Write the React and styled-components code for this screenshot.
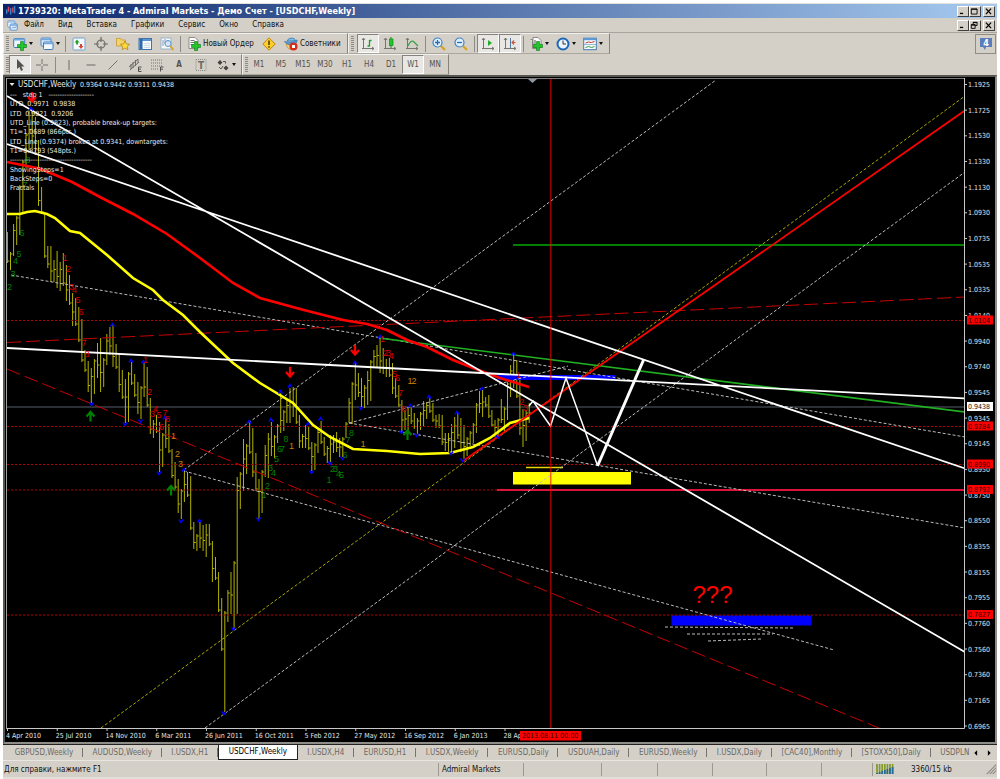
import styled, { createGlobalStyle, css } from "styled-components";

const GlobalStyle = createGlobalStyle`
  * {
    box-sizing: border-box;
  }
  body {
    margin: 3px;
    background: #fff;
    font-family: "DejaVu Sans Condensed", "DejaVu Sans", sans-serif;
    font-size: 8px;
    color: #111;
  }
  button {
    font: inherit;
    color: inherit;
    padding: 0;
    border: none;
    background: none;
  }
`;

// window
const Window = styled.div`
  display: flex;
  flex-direction: column;
  background: #d4d0c8;
  border-top: 1px solid #e4e2dc;
`;

const TitleBar = styled.header`
  display: flex;
  align-items: center;
  height: 14px;
  padding: 0 2px 0 3px;
  gap: 2px;
  background: linear-gradient(to right, #0a246a, #a6caf0);
`;

const Title = styled.h1`
  flex: 1;
  margin: 0;
  font-size: 9px;
  line-height: 14px;
  font-weight: bold;
  color: #fff;
  white-space: nowrap;
`;

const WindowButtons = styled.div`
  display: flex;
  margin-left: auto;

  button:last-child {
    margin-left: 2px;
  }
`;

const WindowButton = styled.button`
  display: flex;
  width: 12px;
  height: 11px;
  background: #d4d0c8;
  border: 1px solid;
  border-color: #fff #404040 #404040 #fff;
`;

const MenuBar = styled.nav`
  display: flex;
  align-items: center;
  height: 15px;
  padding: 0 2px 0 4px;
  border-bottom: 1px solid #a8a59e;
`;

const MenuItem = styled.button`
  height: 14px;
  padding: 0 7px;
  line-height: 14px;
`;

const MenuIcon = styled.span`
  display: flex;
  width: 10px;
`;

// toolbars
const ToolRow = styled.div`
  display: flex;
  height: 21px;
`;

const ToolGroup = styled.div`
  display: flex;
  align-items: center;
  height: 21px;
  padding: 0 2px;
  border: 1px solid;
  border-color: #f2f0ec #86837c #aaa79f #f2f0ec;
`;

const Grip = styled.span`
  width: 3px;
  height: 15px;
  margin-right: ${(p) => p.$gap || 0}px;
  background: repeating-linear-gradient(#8c8a84 0 1px, #d4d0c8 1px 2px);
`;

const Separator = styled.span`
  width: 1px;
  height: 16px;
  margin: 0 2px;
  background: #8c8a84;
`;

const ToolButton = styled.button`
  display: flex;
  align-items: center;
  justify-content: center;
  flex: none;
  gap: 2px;
  width: ${(p) => p.$width || 22}px;
  height: 19px;
  white-space: nowrap;
  border: 1px solid transparent;
  ${(p) =>
    p.$wide &&
    css`
      width: auto;
      padding: 0 3px;
    `}
  ${(p) =>
    p.$active &&
    css`
      background: #e9e7e3;
      border-color: #86837c #fff #fff #86837c;
    `}
`;

const Period = styled(ToolButton)`
  color: #55534f;
  font-size: 8px;
`;

const Notice = styled.button`
  display: flex;
  align-items: center;
  justify-content: center;
  width: 21px;
  height: 20px;
  margin: 1px 1px 0 auto;
  border: 1px solid #8f8c86;
`;

const Glyph = styled.svg`
  display: block;
  flex: none;
  width: ${(p) => p.$size || 14}px;
  height: ${(p) => p.$size || 14}px;
`;

const Caret = styled.span`
  border: 2px solid transparent;
  border-top: 3px solid #111;
  border-bottom: none;
`;

// chart
const ChartFrame = styled.main`
  border: 2px solid;
  border-color: #55564f #8e8c86 #8e8c86 #55564f;
  background: #000;
`;

const ChartSvg = styled.svg`
  display: block;
  width: 100%;
  height: auto;
  font-family: "DejaVu Sans Condensed", "DejaVu Sans", sans-serif;
  font-size: 7px;

  text {
    white-space: pre;
  }
`;

// tabs and status bar
const TabBar = styled.div`
  display: flex;
  height: 16px;
  border-top: 1px solid #222;
`;

const TabList = styled.div`
  display: flex;
  flex: 1;
  min-width: 0;
  padding-left: 2px;
  overflow: hidden;
`;

const Tab = styled.button`
  flex: 1 0 auto;
  height: 15px;
  padding: 0 8px;
  line-height: 14px;
  color: #6b6964;
  position: relative;

  &::after {
    content: "";
    position: absolute;
    right: 0;
    top: 3px;
    height: 9px;
    border-right: 1px solid #77746e;
  }
  &:last-child {
    padding-right: 0;
  }
  &:last-child::after {
    display: none;
  }
  ${(p) =>
    p.$active &&
    css`
      color: #000;
      background: #fff;
      border: 1px solid #222;
      border-top: none;
      &::after {
        display: none;
      }
    `}
`;

const TabArrows = styled.div`
  display: flex;
  align-items: center;
  gap: 5px;
  padding: 0 4px 0 1px;
`;

const StatusBar = styled.footer`
  display: flex;
  align-items: center;
  height: 19px;
  border-top: 1px solid #e8e6e1;
  border-bottom: 2px solid #e2dfd9;
`;

const StatusCell = styled.div`
  display: flex;
  align-items: center;
  flex: none;
  gap: 17px;
  width: ${(p) => p.$width}px;
  height: 13px;
  padding-left: 3px;
  border-left: 1px solid #9c9992;
  white-space: nowrap;
`;

const StatusHelp = styled.div`
  flex: 1;
  padding-left: 1px;
`;

const ResizeCorner = styled(Glyph)`
  margin-left: auto;
`;

// icons
const Plus = ({ x = 0, y = 0 }) => (
  <path
    transform={`translate(${x} ${y})`}
    d="M3 0h3v3h3v3h-3v3h-3v-3h-3v-3h3z"
    fill="#22c52a"
    stroke="#0c7a14"
    strokeWidth=".6"
  />
);

const Axes = () => (
  <path d="M2.500 1v11M1 11.500h12M1 3l1.500-2 1.500 2M11 10l2 1.500-2 1.500" fill="none" stroke="#77756f" />
);

const icons = {
  logo: (
    <>
      <path d="M3.500 1v7M9.500 2v7" stroke="#e0455a" strokeWidth="2" />
      <path d="M6.500 3v9M12 0v10M1 5v6" stroke="#3b86c9" strokeWidth="2" />
    </>
  ),
  menuLogo: (
    <>
      <rect x="1" y="1" width="9" height="8" rx="1" fill="#fff" stroke="#5b92cc" />
      <rect x="4" y="5" width="9" height="8" rx="1" fill="#e6f1fc" stroke="#3d7cc0" />
      <path d="M1 2.500h9M4 6.500h9" stroke="#6aa4de" strokeWidth="1.500" />
      <path d="M6 11l2-2 2 1 2-2" stroke="#3d7cc0" fill="none" />
    </>
  ),
  newChart: (
    <>
      <rect x=".7" y="1.500" width="11" height="9" rx="1" fill="#eef6fd" stroke="#3b79b8" />
      <path d="M1 2.500h10.500" stroke="#70a8dc" strokeWidth="2" />
      <Plus x={4.5} y={4.5} />
    </>
  ),
  profiles: (
    <>
      <rect x="1" y="1" width="10" height="8" rx="1" fill="#dcebfa" stroke="#4a86c2" />
      <rect x="3.500" y="5" width="9.500" height="7.500" rx="1" fill="#f4f9fe" stroke="#3b79b8" />
      <path d="M1.500 2.500h9M4 6.500h8.500" stroke="#6ca6de" strokeWidth="1.500" />
    </>
  ),
  market: (
    <>
      <rect x="1" y="1" width="12" height="12" rx="1" fill="#f6fafd" stroke="#6da3d6" />
      <path d="M5 2.500l2.500 3h-1.500v2h-2v-2h-1.500z" fill="#2ba52f" />
      <path d="M9 12l2.500-3h-1.500v-2h-2v2h-1.500z" fill="#d9442f" />
    </>
  ),
  navigator: (
    <g fill="none" stroke="#6d6b66" strokeWidth="1.200">
      <circle cx="7" cy="7" r="4" />
      <path d="M7 0v5M7 9v5M0 7h5M9 7h5" />
    </g>
  ),
  favorites: (
    <>
      <path d="M.5 1.500h4l1 1.500h4v6h-9z" fill="#f3d36e" stroke="#c49a2b" strokeWidth=".8" />
      <path
        d="M9 4l1.400 3 3.200.3-2.400 2.200.7 3.200-2.900-1.700-2.900 1.700.7-3.200-2.400-2.200 3.200-.3z"
        fill="#ffdf3c"
        stroke="#b98410"
        strokeWidth=".8"
      />
    </>
  ),
  dataWindow: (
    <>
      <rect x="1" y="1.500" width="12.500" height="11" fill="#f2f8fd" stroke="#3f74ad" />
      <path d="M1.500 3h11.500" stroke="#5b95d0" strokeWidth="2" />
      <path d="M3 2v10" stroke="#2f68a8" strokeWidth="3" />
      <path d="M6 6.500h6M6 8.500h6M6 10.500h6" stroke="#c9d4e0" strokeWidth=".8" />
    </>
  ),
  tester: (
    <>
      <rect x="1" y="1" width="10" height="11" fill="#f7fafc" stroke="#88a9c8" strokeWidth=".8" />
      <path d="M3 3v6M5 2v5M8 3v4" stroke="#7d9bb8" />
      <circle cx="8" cy="6.500" r="3" fill="#cfe6fa" fillOpacity=".8" stroke="#5b92c6" />
      <path d="M10.300 9l3 4" stroke="#d8a428" strokeWidth="2" />
    </>
  ),
  newOrder: (
    <>
      <path d="M2 .5h6l3 3v8h-9z" fill="#fff" stroke="#75736d" strokeWidth=".8" />
      <path d="M3.500 3.500h4M3.500 5.500h5M3.500 7.500h3" stroke="#55534f" strokeWidth=".8" />
      <Plus x={4.5} y={4.5} />
    </>
  ),
  warning: (
    <>
      <path d="M7 .8l6.200 6.200-6.200 6.200-6.200-6.200z" fill="#fccf2b" stroke="#c1850b" />
      <path d="M7 3.500v4.500M7 9.300v1.500" stroke="#4a3a08" strokeWidth="1.500" />
    </>
  ),
  experts: (
    <>
      <path d="M2 7q2 7 7 5l3-6z" fill="#f6d372" stroke="#bb8c25" strokeWidth=".7" />
      <path d="M3 4q1-3 5-3 3 0 3.500 3z" fill="#7cbce8" stroke="#2d74ae" strokeWidth=".7" />
      <path d="M.3 4.500q6 2 13-1.500 0 3-3 4.500-6 2-10-3z" fill="#5398d2" stroke="#2d74ae" strokeWidth=".6" />
      <circle cx="9.500" cy="9.500" r="4" fill="#d92a1c" />
      <rect x="8" y="8" width="3" height="3" fill="#fff" />
    </>
  ),
  bars: (
    <>
      <Axes />
      <path d="M8.500 3v6.500M8.500 3.500h2M6.500 9h2" stroke="#1f9a28" strokeWidth="1.300" fill="none" />
    </>
  ),
  candles: (
    <>
      <Axes />
      <path d="M8 0v11" stroke="#128a1c" />
      <rect x="6.500" y="2" width="3.500" height="6.500" fill="#22c52a" stroke="#128a1c" strokeWidth=".7" />
    </>
  ),
  lineChart: (
    <>
      <Axes />
      <path d="M3 9q3-7 6-4l4 4" fill="none" stroke="#3aa142" strokeWidth="1.200" />
    </>
  ),
  zoomIn: (
    <>
      <path d="M8.500 8.500l4.500 4.500" stroke="#d8a428" strokeWidth="2.400" />
      <circle cx="5.500" cy="5.500" r="4.500" fill="#dff0fd" stroke="#3f84c6" strokeWidth="1.200" />
      <path d="M5.500 3v5M3 5.500h5" stroke="#2b6cae" strokeWidth="1.300" />
    </>
  ),
  zoomOut: (
    <>
      <path d="M8.500 8.500l4.500 4.500" stroke="#d8a428" strokeWidth="2.400" />
      <circle cx="5.500" cy="5.500" r="4.500" fill="#dff0fd" stroke="#3f84c6" strokeWidth="1.200" />
      <path d="M3 5.500h5" stroke="#2b6cae" strokeWidth="1.300" />
    </>
  ),
  autoScroll: (
    <>
      <Axes />
      <path d="M7 3l4 3-4 3z" fill="#22ad2a" />
    </>
  ),
  chartShift: (
    <>
      <Axes />
      <path d="M7.500 1v10" stroke="#55799f" />
      <path d="M12.500 5.500h-3.500M11 3.500l-2 2 2 2" fill="none" stroke="#c8553c" strokeWidth="1.100" />
    </>
  ),
  indicators: (
    <>
      <path d="M4 .5h5l3 3v7h-8zM1.500 2.500h2v9h6" fill="#fff" stroke="#75736d" strokeWidth=".8" />
      <path d="M6 3v5" stroke="#55534f" />
      <Plus x={4.5} y={4.5} />
    </>
  ),
  clock: (
    <>
      <circle cx="7" cy="7" r="5.500" fill="#eaf5fe" stroke="#1d66b5" strokeWidth="2" />
      <path d="M7 3.500v3.500h3" fill="none" stroke="#333" />
    </>
  ),
  template: (
    <>
      <rect x=".7" y="1.200" width="12.600" height="11.500" fill="#f6fafd" stroke="#3f7ab5" />
      <path d="M1 2.200h12" stroke="#5b9ad6" strokeWidth="2" />
      <path d="M2.500 6l3-1 3 .5 3-1" fill="none" stroke="#c0392b" />
      <path d="M1 7.500h12" stroke="#7fa6cb" strokeWidth=".8" />
      <path d="M2.500 10.500l3-1 3 1 3-1" fill="none" stroke="#2f9a3a" />
    </>
  ),
  cursor: <path d="M4 1v10l2.500-2 1.500 4 2-1-1.700-3.500h3.200z" fill="#55534f" />,
  crosshair: <path d="M7 1v5M7 8v5M1 7h5M8 7h5" stroke="#75736d" />,
  vline: <path d="M7 2v10" stroke="#6d6b66" />,
  hline: <path d="M2.500 7h9" stroke="#6d6b66" />,
  trend: <path d="M2.500 11.500l9-9" stroke="#75736d" />,
  channel: (
    <>
      <path d="M1 9l9-8M2 12l9-8M3 6v5M5 4v6M7.500 2v6M10 1v4" stroke="#6d6b66" fill="none" />
      <path d="M13.500 9h-3v4.500h3M10.500 11.200h2.500" stroke="#44423e" fill="none" strokeWidth=".9" />
    </>
  ),
  fibo: (
    <>
      <path d="M1 2h11M1 5h11M1 8h11M1 11h7" stroke="#75736d" strokeDasharray="1 1" />
      <path d="M13.500 9h-3v4.500M10.500 11.200h2.500" stroke="#44423e" fill="none" strokeWidth=".9" />
    </>
  ),
  label: <rect x="2" y="1.500" width="10" height="11" fill="none" stroke="#8c8a84" strokeDasharray="1 1" />,
  arrows: (
    <>
      <path d="M4 2l2.500 2.500-2.500 2.500-2.500-2.500zM10 7.500l2.500 2.500-2.500 2.500-2.500-2.500z" fill="#44423e" />
      <path d="M3 9l2 2 2-3M7 3.500h2.500v2" stroke="#55534f" fill="none" />
    </>
  ),
  minimize: <path d="M3 10h5" stroke="#000" strokeWidth="2" />,
  maximize: <path d="M2 3h9v8h-9zM2 3.500h9" stroke="#000" strokeWidth="1.400" fill="none" />,
  restore: <path d="M5 5v-3h6v5h-3M2 5.500h6v6h-6zM5 2.500h6M2 6.500h6" stroke="#000" strokeWidth="1.400" fill="none" />,
  close: <path d="M3 2.500l8 8.500M11 2.500l-8 8.500" stroke="#000" strokeWidth="2" />,
  prev: <path d="M9 2v10l-5-5z" fill="#000" />,
  next: <path d="M5 2v10l5-5z" fill="#000" />,
  corner: <path d="M13 2l-11 11M13 5.500l-7.500 7.500M13 9l-4 4" stroke="#8c8a84" strokeWidth="1.300" />,
};

const Icon = ({ name, size, children }) => (
  <Glyph viewBox="0 0 14 14" $size={size} aria-hidden="true">
    {icons[name]}
    {children}
  </Glyph>
);

// [high, low] of every weekly bar, from the left edge
const bars = [
  [232, 263], [252, 270], [224, 256], [216, 245], [185, 235], [160, 213], [133, 168], [110, 150],
  [111, 148], [117, 155], [140, 206], [187, 214], [214, 258], [246, 268], [246, 282], [260, 282],
  [251, 288], [262, 291], [253, 286], [265, 301], [275, 305], [293, 326], [298, 326], [307, 342],
  [319, 362], [350, 372], [361, 392], [368, 403], [359, 394], [343, 378], [338, 392], [358, 387],
  [334, 365], [327, 355], [325, 367], [344, 369], [353, 392], [370, 399], [379, 423], [372, 422],
  [362, 385], [374, 397], [382, 414], [386, 419], [363, 397], [367, 407], [398, 434], [420, 438],
  [415, 433], [422, 472], [433, 467], [418, 448], [424, 453], [449, 478], [462, 489], [479, 513],
  [489, 519], [470, 502], [472, 497], [476, 530], [522, 549], [534, 551], [522, 548], [525, 551],
  [524, 557], [524, 546], [541, 582], [557, 580], [572, 612], [598, 651], [611, 712], [590, 622],
  [572, 614], [561, 629], [477, 614], [472, 509], [439, 491], [444, 474], [423, 454], [428, 477],
  [453, 491], [479, 519], [470, 513], [445, 477], [433, 478], [422, 456], [435, 458], [424, 443],
  [393, 433], [410, 431], [400, 423], [388, 423], [387, 417], [388, 424], [415, 448], [434, 448],
  [425, 448], [427, 450], [442, 471], [443, 470], [430, 453], [421, 444], [437, 456], [446, 463],
  [435, 462], [435, 453], [432, 452], [438, 457], [437, 457], [422, 438], [398, 423], [382, 424],
  [363, 400], [373, 397], [378, 407], [385, 408], [371, 405], [360, 401], [350, 368], [345, 368],
  [338, 373], [348, 374], [359, 377], [358, 377], [363, 394], [378, 398], [385, 407], [400, 432],
  [410, 430], [408, 430], [407, 424], [413, 429], [418, 435], [412, 430], [401, 427], [402, 419],
  [398, 413], [403, 422], [415, 428], [414, 428], [415, 445], [433, 451], [433, 452], [424, 453],
  [417, 448], [413, 439], [418, 452], [425, 460], [437, 456], [431, 446], [423, 443], [403, 433],
  [391, 413], [390, 417], [397, 407], [395, 418], [410, 427], [420, 437], [418, 437], [399, 423],
  [407, 432], [382, 420], [365, 397], [354, 388], [360, 398], [377, 435], [409, 447], [410, 441],
  [403, 423],
];

const FIRST_X = 7.4;
const BAR_STEP = 3.106;

const barPath = bars
  .map(([high, low], i) => {
    const x = FIRST_X + i * BAR_STEP;
    // the close leans to the middle of the next bar
    const next = bars[i + 1] || bars[i];
    const mid = (next[0] + next[1]) / 2;
    const close = Math.min(low - 2, Math.max(high + 2, mid));
    return `M${x.toFixed(1)} ${high}V${low}M${x.toFixed(1)} ${close}h2`;
  })
  .join("");

const prices = [
  "1.1925", "1.1725", "1.1530", "1.1330", "1.1130", "1.0930", "1.0735", "1.0535", "1.0335",
  "1.0140", "0.9940", "0.9740", "0.9545", "0.9345", "0.9145", "0.8950", "0.8750", "0.8550",
  "0.8355", "0.8155", "0.7955", "0.7760", "0.7560", "0.7360", "0.7165", "0.6965",
];

const dates = [
  "4 Apr 2010", "25 Jul 2010", "14 Nov 2010", "6 Mar 2011", "26 Jun 2011", "16 Oct 2011",
  "5 Feb 2012", "27 May 2012", "16 Sep 2012", "6 Jan 2013", "28 Ap",
];

const levels = [
  ["1.0104", 320.5],
  ["0.9284", 426.5],
  ["0.8990", 464.5],
  ["0.8792", 490],
  ["0.7827", 615],
];

const dottedLines = [
  [205, 728, 965, 172],
  [184, 470, 716, 80],
  [184, 471, 834, 650],
  [11, 275, 965, 437],
  [349, 423, 965, 528],
  [349, 423, 568, 366],
  [665, 627, 794, 628],
  [687, 634, 773, 634],
  [708, 641, 761, 639],
];

const fractalsUp = [
  [31, 109], [112.5, 325], [131, 361], [143.5, 362], [165, 418], [184, 470], [199.5, 521],
  [249, 422], [271, 420], [280.5, 392], [290, 386], [308, 424], [320.5, 419], [355, 363],
  [380, 337], [410.5, 406], [429, 397], [457, 413], [482, 389], [513.5, 354],
];

const fractalsDown = [
  [91.5, 404], [125, 424], [140.5, 421], [159, 473], [181, 521], [224, 713], [233.5, 629],
  [258.5, 519], [311.5, 472], [330, 463], [342.5, 458], [361, 408], [401.5, 432], [416.5, 435],
  [451, 453], [462.5, 460], [498, 437],
];

const GREEN = "#008000";
const RED = "#d80000";
const ORANGE = "#d08000";

const counts = [
  [GREEN, [[2, 9.5, 290], [3, 13, 276.5], [4, 15.5, 264], [5, 19, 256.5], [6, 22, 235.5], [7, 25, 188], [8, 28, 163]]],
  [RED, [[1, 65, 260.5], [2, 68.5, 271.5], [3, 71.5, 290], [4, 74.5, 293], [5, 78, 303], [6, 81, 315], [7, 84, 346], [8, 87, 357]]],
  [RED, [[1, 145.5, 363], [2, 149.5, 395], [3, 152.5, 416.5], [4, 155.5, 411.5], [5, 159, 418], [6, 161.5, 430], [7, 165, 415.5], [8, 167.5, 421.5]]],
  [ORANGE, [[1, 173.5, 439], [2, 177.5, 457], [3, 180.5, 466.5]]],
  [GREEN, [[1, 264, 498], [2, 267.5, 489], [3, 270.5, 470.5], [4, 273.5, 475.5], [5, 276.5, 462], [6, 279.5, 452], [7, 282.5, 451.5], [8, 286, 442]]],
  [ORANGE, [[1, 291.5, 449], [1, 363, 447], [1, 410, 384], [2, 414, 384]]],
  [GREEN, [[1, 329, 483], [2, 332.5, 471.5], [3, 335.5, 472], [4, 338.5, 476.5], [5, 341.5, 477.5], [6, 345, 458], [7, 348, 443], [8, 351.5, 435.5]]],
  [RED, [[1, 382.5, 342], [2, 385.5, 355.5], [3, 388.5, 355.5], [4, 391.5, 359], [5, 394.5, 376.5], [6, 397.5, 380.5], [7, 400.5, 395.5], [8, 404, 412]]],
  [RED, [[1, 518.5, 378], [2, 522, 405], [3, 525.5, 410.5]]],
];

const comments = [
  ["UTD  0.9971  0.9838", 106],
  ["LTD  0.9821  0.9206", 116],
  ["UTD_Line (0.9823), probable break-up targets:", 125],
  ["T1=1.0689 (866pts.)", 134],
  ["LTD_Line (0.9374) broken at 0.9341, downtargets:", 144],
  ["T1=0.8793 (548pts.)", 153],
  ["------------------------------------", 162],
  ["ShowingSteps=1", 172],
  ["BackSteps=0", 181],
  ["Fractals", 190],
];

const BigArrow = ({ x, y, color, up }) => (
  <path
    transform={`translate(${x} ${y})${up ? "" : " scale(1 -1)"}`}
    d="M0 5v-9M-4 0l4-4.500 4 4.500"
    fill="none"
    stroke={color}
    strokeWidth="2.200"
  />
);

const Chart = () => (
  <ChartSvg viewBox="5 77 990 665" role="img" aria-label="USDCHF,Weekly">
    <defs>
      <clipPath id="plot">
        <rect x="7" y="79" width="957" height="649" />
      </clipPath>
    </defs>

    <g clipPath="url(#plot)" fill="none">
      <path d="M7 407H965" stroke="#56616e" />

      <path d={barPath} stroke="#b4b400" />

      {/* zones */}
      <rect x="497" y="375" width="118.500" height="5" fill="#0000ff" />
      <rect x="513" y="472" width="118" height="12.500" fill="#ffff00" />
      <rect x="671.500" y="615.500" width="140" height="10" fill="#0000ff" />
      <path d="M526 467.500H563" stroke="#e6d800" strokeWidth="1.500" />
      <path d="M513 245H965" stroke="#008000" strokeWidth="2" />

      {/* levels and trend lines */}
      {levels.map(([price, y]) => (
        <path key={price} d={`M7 ${y}H965`} stroke="#b40000" strokeDasharray="2 2" />
      ))}
      <path d="M497 490H965" stroke="#dc143c" strokeWidth="2" />
      {dottedLines.map(([x1, y1, x2, y2]) => (
        <line key={`${x1}-${x2}-${y2}`} x1={x1} y1={y1} x2={x2} y2={y2} stroke="#bcbcbc" strokeDasharray="3 2" />
      ))}
      <path d="M101 728L965 96" stroke="#a8a800" strokeDasharray="3 2" />
      <path d="M7 342.500L965 297M7 369L879 728" stroke="#c80000" strokeDasharray="14 5" />
      <path d="M379 338L965 412" stroke="#22b022" strokeWidth="1.600" />

      {/* moving averages */}
      <path
        d="M7 162L37 168 53 174 72 182 100 197 133 214 167 234 200 258 233 283 260 298 300 309 343 320 367 324 387 330 407 340 427 347 453 360 473 368 500 378 529 387"
        stroke="#ff0000"
        strokeWidth="2.600"
      />
      <path
        d="M7 214L20 214 27 212 35 211 47 214 55 218 70 231 80 233 107 255 133 278 153 290 163 300 183 315 200 332 233 363 260 383 293 403 313 425 330 437 353 449 387 451 420 454 450 453 473 447 490 438 510 423 529 418"
        stroke="#ffff00"
        strokeWidth="2.600"
      />

      <path d="M463 461L965 110.500" stroke="#ff0000" strokeWidth="1.800" />
      <path d="M7 96L965 652M7 144L965 468.500M7 348L965 398.500" stroke="#fff" strokeWidth="1.800" />

      {/* forecast */}
      <path d="M529 406L533 401 550.500 426 566 378 597.500 465.500" stroke="#fff" strokeWidth="1.500" />
      <path d="M597.500 466L643.500 360" stroke="#fff" strokeWidth="3" />

      {fractalsUp.map(([x, y]) => (
        <path key={`u${x}`} d={`M${x - 2} ${y + 1.5}l2 -3 2 3`} stroke="#0000ff" strokeWidth="1.400" />
      ))}
      {fractalsDown.map(([x, y]) => (
        <path key={`d${x}`} d={`M${x - 2} ${y - 1.5}l2 3 2 -3`} stroke="#0000ff" strokeWidth="1.400" />
      ))}
      <BigArrow x={32} y={97} color="#ff0000" />
      <BigArrow x={290} y={372} color="#ff0000" />
      <BigArrow x={355} y={350} color="#ff0000" />
      <BigArrow x={90.5} y={416.5} color="#008000" up />
      <BigArrow x={171} y={490.5} color="#008000" up />
      <BigArrow x={407.5} y={435} color="#008000" up />

      <path d="M550.700 79V728" stroke="#ff0000" strokeOpacity=".6" strokeWidth="1.500" />
    </g>

    <g fontFamily="Liberation Sans, sans-serif" fontSize="9" textAnchor="middle">
      {counts.map(([color, marks]) =>
        marks.map(([n, x, y]) => (
          <text key={`${x}-${y}`} x={x} y={y} fill={color}>
            {n}
          </text>
        ))
      )}
      <text x="712.500" y="603" fontSize="24" fill="#ff0000">
        ???
      </text>
    </g>

    {/* axes */}
    <path d="M7 78.500H965" stroke="#7c7c7c" />
    <path d="M6.500 78V729" stroke="#a0a0a0" />
    <path d="M7 728.500H964.500V78" fill="none" stroke="#c8c8c8" />
    <path d="M528 79h9l-4.500 4z" fill="#8e98a0" />

    <g fill="#e4e4e4">
      {prices.map((price, i) => (
        <g key={price}>
          <path d={`M965 ${84.5 + i * 25.66}h2`} stroke="#c8c8c8" />
          <text x="968" y={87 + i * 25.66}>
            {price}
          </text>
        </g>
      ))}
      {dates.map((date, i) => (
        <g key={date}>
          <path d={`M${7.5 + i * 49.75} 729v2`} stroke="#c8c8c8" />
          <text x={6 + i * 49.75} y="738">
            {date}
          </text>
        </g>
      ))}
    </g>

    {levels.map(([price, y]) => (
      <g key={price}>
        <rect x="967" y={y - 5} width="26" height="9" fill="#ff0000" />
        <text x="968" y={y + 2} fill="#200000">
          {price}
        </text>
      </g>
    ))}
    <rect x="967" y="402" width="26" height="9" fill="#fff" />
    <text x="968" y="409" fill="#111">
      0.9438
    </text>
    <rect x="520" y="731" width="61" height="9.500" fill="#ff0000" />
    <text x="522" y="738" fill="#200000">
      2013.08.11 00:00
    </text>

    {/* indicator comment */}
    <g fill="#e8e8e8">
      <path d="M9.500 83h5l-2.500 3z" />
      <text x="18" y="87" fontSize="8">
        USDCHF,Weekly
      </text>
      <text x="80" y="87">
        0.9364 0.9442 0.9311 0.9438
      </text>
      <text x="10" y="97">
        {"---   step 1   --------------------"}
      </text>
      {comments.map(([line, y]) => (
        <text key={y} x="10" y={y}>
          {line}
        </text>
      ))}
    </g>
  </ChartSvg>
);

const menus = ["Файл", "Вид", "Вставка", "Графики", "Сервис", "Окно", "Справка"];
const periods = ["M1", "M5", "M15", "M30", "H1", "H4", "D1", "W1", "MN"];
const tabs = [
  "GBPUSD,Weekly", "AUDUSD,Weekly", "I.USDX,H1", "USDCHF,Weekly", "I.USDX,H4", "EURUSD,H1",
  "I.USDX,Weekly", "EURUSD,Daily", "USDUAH,Daily", "EURUSD,Weekly", "I.USDX,Daily",
  "[CAC40],Monthly", "[STOXX50],Daily", "USDPLN",
];

const Tool = ({ icon, label, active, drop }) => (
  <ToolButton aria-label={label} aria-pressed={active} $active={active} $width={drop && 27}>
    <Icon name={icon} />
    {drop && <Caret />}
  </ToolButton>
);

const Controls = ({ middle }) => (
  <WindowButtons>
    {["minimize", middle, "close"].map((name) => (
      <WindowButton key={name} aria-label={name}>
        <Icon name={name} size={9} />
      </WindowButton>
    ))}
  </WindowButtons>
);

const App = () => {
  return (
    <>
      <GlobalStyle />
      <Window>
        <TitleBar>
          <Icon name="logo" size={10} />
          <Title>1739320: MetaTrader 4 - Admiral Markets - Демо Счет - [USDCHF,Weekly]</Title>
          <Controls middle="maximize" />
        </TitleBar>

        <MenuBar>
          <MenuIcon>
            <Icon name="menuLogo" size={11} />
          </MenuIcon>
          {menus.map((menu) => (
            <MenuItem key={menu}>{menu}</MenuItem>
          ))}
          <Controls middle="restore" />
        </MenuBar>

        <ToolRow>
          <ToolGroup>
            <Grip />
            <Tool icon="newChart" label="New chart" drop />
            <Tool icon="profiles" label="Profiles" drop />
            <Separator />
            <Tool icon="market" label="Market watch" />
            <Tool icon="navigator" label="Data window" />
            <Tool icon="favorites" label="Navigator" />
            <Tool icon="dataWindow" label="Terminal" />
            <Tool icon="tester" label="Strategy tester" />
            <Separator />
            <ToolButton $wide>
              <Icon name="newOrder" />
              Новый Ордер
            </ToolButton>
            <Tool icon="warning" label="MetaEditor" />
            <ToolButton $wide>
              <Icon name="experts" />
              Советники
            </ToolButton>
          </ToolGroup>
          <ToolGroup>
            <Grip $gap={3} />
            <Tool icon="bars" label="Bar chart" active />
            <Tool icon="candles" label="Candlesticks" />
            <Tool icon="lineChart" label="Line chart" />
            <Separator />
            <Tool icon="zoomIn" label="Zoom in" />
            <Tool icon="zoomOut" label="Zoom out" />
            <Separator />
            <Tool icon="autoScroll" label="Auto scroll" active />
            <Tool icon="chartShift" label="Chart shift" active />
            <Separator />
            <Tool icon="indicators" label="Indicators" drop />
            <Tool icon="clock" label="Periods" drop />
            <Tool icon="template" label="Templates" drop />
          </ToolGroup>
          <Notice aria-label="Messages">
            <Glyph viewBox="0 0 14 14">
              <path d="M1 1h12v9h-6l-1 3-2-3h-3z" fill="#5b7dbb" />
              <text x="7" y="9" fontSize="9" fontWeight="bold" fill="#fff" textAnchor="middle">
                4
              </text>
            </Glyph>
          </Notice>
        </ToolRow>

        <ToolRow>
          <ToolGroup>
            <Grip />
            <Tool icon="cursor" label="Cursor" active />
            <Tool icon="crosshair" label="Crosshair" />
            <Separator />
            <Tool icon="vline" label="Vertical line" />
            <Tool icon="hline" label="Horizontal line" />
            <Tool icon="trend" label="Trend line" />
            <Tool icon="channel" label="Channel" />
            <Tool icon="fibo" label="Fibonacci" />
            <Period aria-label="Text">
              <b>A</b>
            </Period>
            <ToolButton aria-label="Text label">
              <Icon name="label">
                <text x="7" y="11" fontSize="10" fontWeight="bold" fill="#6d6b66" textAnchor="middle">
                  T
                </text>
              </Icon>
            </ToolButton>
            <Tool icon="arrows" label="Arrows" drop />
          </ToolGroup>
          <ToolGroup>
            <Grip />
            {periods.map((period) => (
              <Period key={period} $active={period === "W1"}>
                {period}
              </Period>
            ))}
          </ToolGroup>
        </ToolRow>

        <ChartFrame>
          <Chart />
        </ChartFrame>

        <TabBar>
          <TabList>
            {tabs.map((tab) => (
              <Tab key={tab} $active={tab === "USDCHF,Weekly"}>
                {tab}
              </Tab>
            ))}
          </TabList>
          <TabArrows>
            <button aria-label="Previous">
              <Icon name="prev" size={8} />
            </button>
            <button aria-label="Next">
              <Icon name="next" size={8} />
            </button>
          </TabArrows>
        </TabBar>

        <StatusBar>
          <StatusHelp>Для справки, нажмите F1</StatusHelp>
          <StatusCell $width={85}>Admiral Markets</StatusCell>
          <StatusCell $width={78} />
          <StatusCell $width={56} />
          <StatusCell $width={55} />
          <StatusCell $width={54} />
          <StatusCell $width={55} />
          <StatusCell $width={51} />
          <StatusCell $width={125}>
            <svg width="18" height="10" viewBox="0 0 18 10" aria-hidden="true">
              <path d="M1 0v10M3.600 0v10M6.200 0v10M8.800 0v10M11.400 0v10M14 0v10M16.600 0v10" stroke="#7f9a2a" strokeWidth="1.700" />
              <path d="M1 9v1M3.600 8v2M6.200 7v3M8.800 6v4M11.400 5v5M14 4v6M16.600 3v7" stroke="#23699b" strokeWidth="1.700" />
            </svg>
            3360/15 kb
            <ResizeCorner viewBox="0 0 14 14" $size={12} aria-hidden="true">
              {icons.corner}
            </ResizeCorner>
          </StatusCell>
        </StatusBar>
      </Window>
    </>
  );
};

export default App;
